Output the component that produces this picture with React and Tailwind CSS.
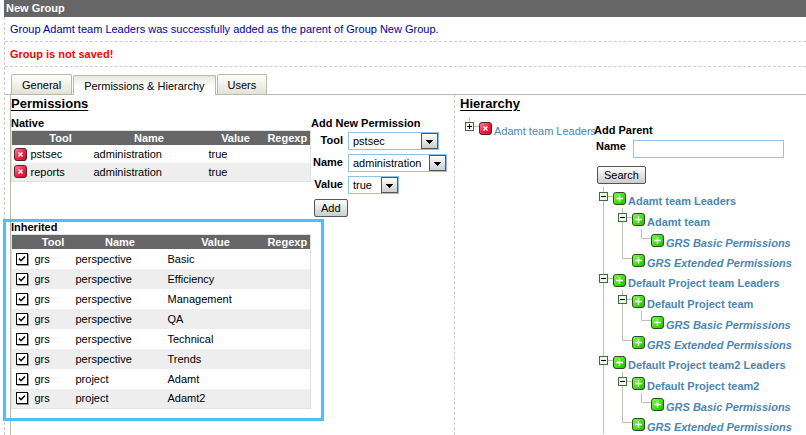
import React, { useState } from 'react';

const NATIVE = [
  { tool: 'pstsec', name: 'administration', value: 'true' },
  { tool: 'reports', name: 'administration', value: 'true' }
];

const INHERITED = [
  { tool: 'grs', name: 'perspective', value: 'Basic' },
  { tool: 'grs', name: 'perspective', value: 'Efficiency' },
  { tool: 'grs', name: 'perspective', value: 'Management' },
  { tool: 'grs', name: 'perspective', value: 'QA' },
  { tool: 'grs', name: 'perspective', value: 'Technical' },
  { tool: 'grs', name: 'perspective', value: 'Trends' },
  { tool: 'grs', name: 'project', value: 'Adamt' },
  { tool: 'grs', name: 'project', value: 'Adamt2' }
];

const TEAMS = ['Adamt team', 'Default Project team', 'Default Project team2'];

const RemoveIcon = () => (
  <svg width="13" height="13" viewBox="0 0 13 13" className="block">
    <defs>
      <linearGradient id="red" x1="0" y1="0" x2="1" y2="1">
        <stop offset="0" stopColor="#ff8c9c" />
        <stop offset="0.5" stopColor="#f02848" />
        <stop offset="1" stopColor="#cc0828" />
      </linearGradient>
    </defs>
    <rect x="0.5" y="0.5" width="12" height="12" rx="2.5" fill="url(#red)" stroke="#5a2028" />
    <path d="M4.5 4.5l4 4M8.5 4.5l-4 4" stroke="#fff" strokeWidth="1.4" />
  </svg>
);

const AddIcon = () => (
  <svg width="13" height="13" viewBox="0 0 13 13" className="block">
    <defs>
      <linearGradient id="green" x1="0" y1="0" x2="1" y2="1">
        <stop offset="0" stopColor="#8cf464" />
        <stop offset="0.5" stopColor="#44e414" />
        <stop offset="1" stopColor="#28b400" />
      </linearGradient>
    </defs>
    <rect x="0.5" y="0.5" width="12" height="12" rx="2.5" fill="url(#green)" stroke="#2c4c24" />
    <path d="M6.5 3v7M3 6.5h7" stroke="#fff" strokeWidth="1.4" />
  </svg>
);

// one 19px wide column of the tree: line, elbow, minus or plus
const Gutter = ({ kind }) => {
  const lines = {
    line: 'M9.5 0V21',
    elbow: 'M9.5 0V9.5H19',
    minus: 'M9.5 0V21M9.5 9.5H19',
    plus: 'M9.5 0V9.5H19'
  };
  const svg = (
    <svg width="19" height="21" viewBox="0 0 19 21" className="block">
      <path d={lines[kind]} fill="none" stroke="#c0c0b0" />
      {(kind === 'minus' || kind === 'plus') && (
        <>
          <rect x="5.5" y="5.5" width="8" height="8" fill="#f4f4ee" stroke="#3c6e3c" />
          <path d={kind === 'plus' ? 'M7 9.5h5M9.5 7v5' : 'M7 9.5h5'} stroke="#000" />
        </>
      )}
    </svg>
  );
  if (kind === 'minus' || kind === 'plus') {
    return <button type="button" aria-label={kind === 'plus' ? 'Expand' : 'Collapse'} className="shrink-0">{svg}</button>;
  }
  return <span className="shrink-0">{svg}</span>;
};

const TreeRow = ({ gutters, label, icon, height = 'h-5', className = '' }) => (
  <li className={`flex items-start whitespace-nowrap ${height}`}>
    {gutters.map((kind, idx) => <Gutter key={idx} kind={kind} />)}
    <button type="button" aria-label={icon === 'remove' ? 'Remove' : 'Add'} className="shrink-0 pt-[5px]">
      {icon === 'remove' ? <RemoveIcon /> : <AddIcon />}
    </button>
    <a href="#" className={`pl-0.5 pt-1.5 leading-4 text-[#4a86b4] ${className}`}>{label}</a>
  </li>
);

const HeadRow = () => (
  <thead>
    <tr className="h-3.5 bg-[#666] text-white text-center">
      <th className="p-0"></th>
      <th className="p-0">Tool</th>
      <th className="p-0">Name</th>
      <th className="p-0">Value</th>
      <th className="p-0">Regexp</th>
    </tr>
  </thead>
);

const Check = ({ label }) => {
  const [checked, setChecked] = useState(true);
  return (
    <span className="relative block w-3 h-3 ml-1">
      <input
        type="checkbox"
        aria-label={label}
        checked={checked}
        onChange={() => setChecked(!checked)}
        className="block w-3 h-3 appearance-none bg-white border border-black shadow-[1px_1px_0_#999]"
      />
      {checked && (
        <svg width="12" height="12" viewBox="0 0 12 12" className="absolute inset-0 pointer-events-none">
          <path d="M3 5.5l2 2.2L9 3.5" fill="none" stroke="#000" strokeWidth="1.6" />
        </svg>
      )}
    </span>
  );
};

const SelectField = ({ id, label, options, width }) => (
  <div className="flex items-start mb-1">
    <label htmlFor={id} className="w-8 mr-[5px] text-right font-bold leading-4">{label}</label>
    <span className={`relative block ${width}`}>
      <select id={id} className="block w-full h-[18px] appearance-none border border-[#8ec4e8] bg-white pl-1 leading-4">
        {options.map((option) => <option key={option}>{option}</option>)}
      </select>
      <svg width="17" height="16" viewBox="0 0 17 16" className="absolute right-px top-px pointer-events-none">
        <defs>
          <linearGradient id="drop" x1="0" y1="0" x2="0" y2="1">
            <stop offset="0" stopColor="#fff" />
            <stop offset="1" stopColor="#ccc" />
          </linearGradient>
        </defs>
        <rect x="0.5" y="0.5" width="16" height="15" fill="url(#drop)" stroke="#555" />
        <path d="M5 7h7v1h-1v1h-1v1h-1v1h-1v-1h-1v-1h-1v-1h-1z" fill="#000" />
      </svg>
    </span>
  </div>
);

const PushButton = ({ children, className = '' }) => (
  <button
    type="button"
    className={`h-[18px] rounded-[2px] border border-[#555] bg-linear-to-b from-white to-[#ccc] px-1.5 leading-4 ${className}`}
  >
    {children}
  </button>
);

const TABS = ['General', 'Permissions & Hierarchy', 'Users'];

const App = () => {
  const [active, setActive] = useState(TABS[1]);

  return (
    <div className="min-h-screen flex flex-col bg-white pl-1 font-['Liberation_Sans',Arial,sans-serif] text-[11px] text-black">
      <h1 className="h-[17px] bg-[#666] pl-0.5 font-bold leading-4 text-white">New Group</h1>
      <div className="flex-1 flex flex-col border-l border-dashed border-[#ccc]">
        <p className="border-b border-dashed border-[#ccc] pl-[5px] h-[25px] leading-6 text-[#0000b0]">
          Group Adamt team Leaders was successfully added as the parent of Group New Group.
        </p>
        <p className="border-b border-dashed border-[#ccc] pl-[5px] h-[25px] leading-6 font-bold text-[#f00]">
          Group is not saved!
        </p>

        <div className="flex items-end gap-px pt-[7px] pl-1.5 border-b border-[#b8b8ac]">
          {TABS.map((tab) => (
            <button
              key={tab}
              type="button"
              onClick={() => setActive(tab)}
              className={`h-5 border border-b-0 border-[#b8b8ac] px-2.5 leading-5 rounded-t-[2px] ${
                tab === active ? '-mb-px bg-linear-to-b from-[#e8e8de] to-white to-60%' : 'bg-linear-to-b from-white to-[#e2e2d6]'
              }`}
            >
              {tab}
            </button>
          ))}
        </div>

        <div className="flex-1 flex ml-[5px] border-l border-[#b8b8ac]">
          <section className="flex basis-[444px] shrink-0 border-r border-dashed border-[#ccc]">
            <div className="w-[300px] shrink-0">
              <h2 className="text-[13px] leading-[18px] font-bold underline underline-offset-2">Permissions</h2>
              <h3 className="mt-1 font-bold leading-[13px]">Native</h3>
              <table className="w-full table-fixed border border-[#e2e2e2] leading-3.5">
                <colgroup>
                  <col className="w-[18px]" />
                  <col className="w-[62px]" />
                  <col className="w-[115px]" />
                  <col className="w-[58px]" />
                  <col />
                </colgroup>
                <HeadRow />
                <tbody>
                  {NATIVE.map((row) => (
                    <tr key={row.tool} className="h-[18px] even:bg-[#eee]">
                      <td className="p-0 pl-0.5">
                        <button type="button" aria-label={`Remove ${row.tool}`} className="block"><RemoveIcon /></button>
                      </td>
                      <td className="p-0 pl-px">{row.tool}</td>
                      <td className="p-0 pl-0.5">{row.name}</td>
                      <td className="p-0 pl-0.5">{row.value}</td>
                      <td></td>
                    </tr>
                  ))}
                </tbody>
              </table>

              <div className="relative mt-[38px]">
                <h3 className="font-bold leading-[14px]">Inherited</h3>
                <table className="w-full table-fixed border border-[#e2e2e2] leading-3.5">
                  <colgroup>
                    <col className="w-[21px]" />
                    <col className="w-[41px]" />
                    <col className="w-[93px]" />
                    <col className="w-[98px]" />
                    <col />
                  </colgroup>
                  <HeadRow />
                  <tbody>
                    {INHERITED.map((row) => (
                      <tr key={row.value} className="h-5 even:bg-[#eee]">
                        <td className="p-0"><Check label={row.value} /></td>
                        <td className="p-0 pl-0.5">{row.tool}</td>
                        <td className="p-0 pl-0.5">{row.name}</td>
                        <td className="p-0 pl-px">{row.value}</td>
                        <td></td>
                      </tr>
                    ))}
                  </tbody>
                </table>
                <div className="absolute -left-2 -right-[13px] -top-px -bottom-3 border-3 border-[#4abfff] pointer-events-none" />
              </div>
            </div>

            <div className="pt-5">
              <h3 className="font-bold leading-4 mb-px">Add New Permission</h3>
              <SelectField id="tool" label="Tool" options={['pstsec', 'reports']} width="w-[91px]" />
              <SelectField id="name" label="Name" options={['administration']} width="w-[99px]" />
              <SelectField id="value" label="Value" options={['true', 'false']} width="w-[51px]" />
              <PushButton className="mt-px ml-[3px]">Add</PushButton>
            </div>
          </section>

          <section className="flex-1 min-w-0 pl-[5px]">
            <h2 className="text-[13px] leading-[18px] font-bold underline underline-offset-2">Hierarchy</h2>
            <div className="flex pt-1">
              <ul className="w-[134px] shrink-0">
                <TreeRow gutters={['plus']} label="Adamt team Leaders" icon="remove" height="h-[21px]" />
              </ul>
              <div className="flex-1 min-w-0">
                <h3 className="pt-[5px] font-bold leading-4">Add Parent</h3>
                <div className="flex items-start pl-0.5 mt-px">
                  <label htmlFor="parent" className="w-[37px] font-bold leading-3.5">Name</label>
                  <input id="parent" type="text" className="mt-px w-[151px] h-[18px] border border-[#8ec4e8] px-1" />
                </div>
                <PushButton className="mt-2 ml-[3px]">Search</PushButton>
                <ul className="mt-[3px] font-bold">
                  {TEAMS.map((team) => (
                    <React.Fragment key={team}>
                      <TreeRow gutters={['minus']} label={`${team} Leaders`} height="h-[21px]" />
                      <TreeRow gutters={['line', 'minus']} label={team} height="h-[21px]" />
                      <TreeRow gutters={['line', 'line', 'elbow']} label="GRS Basic Permissions" className="italic" />
                      <TreeRow gutters={['line', 'elbow']} label="GRS Extended Permissions" className="italic" />
                    </React.Fragment>
                  ))}
                </ul>
              </div>
            </div>
          </section>
        </div>
      </div>
    </div>
  );
};

export default App;
